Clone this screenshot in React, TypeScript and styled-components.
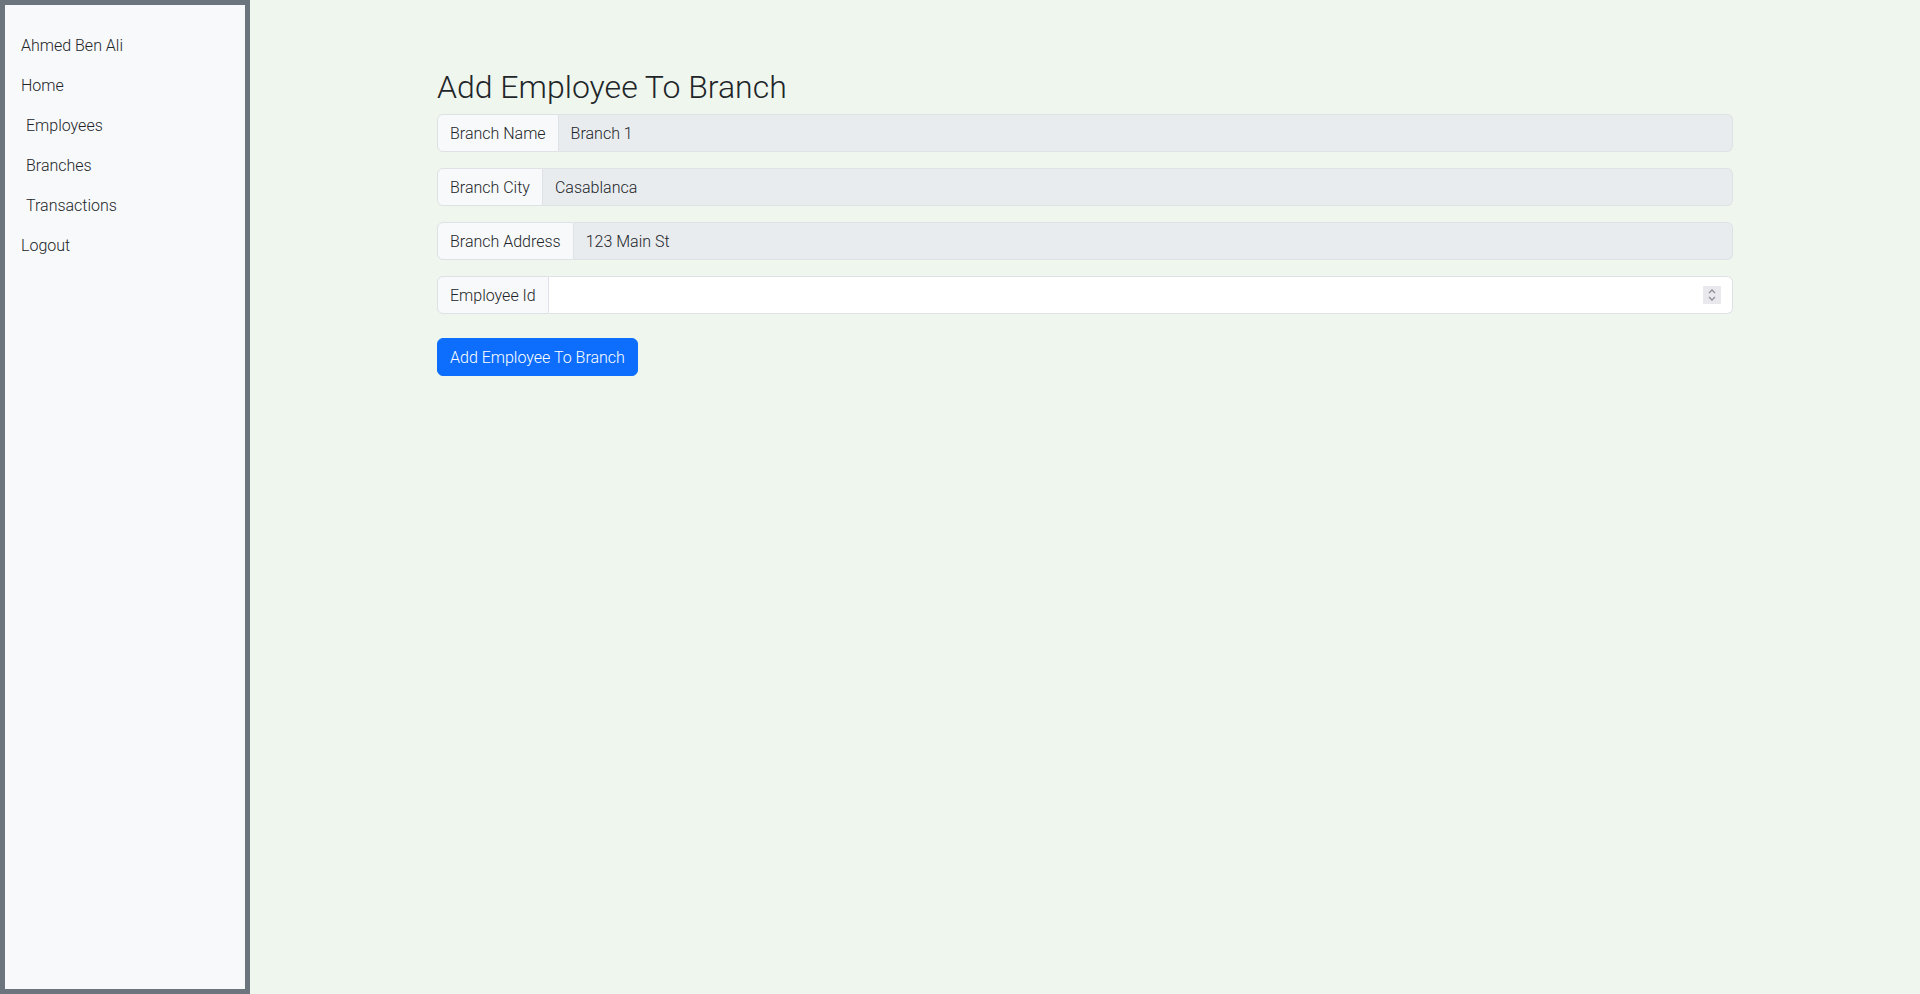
import { FC } from "react";
import styled, { createGlobalStyle } from "styled-components";

const GlobalStyle = createGlobalStyle`
  *, *::before, *::after {
    box-sizing: border-box;
  }
  body {
    margin: 0;
    font-family: Roboto, "Liberation Sans", sans-serif;
    font-weight: 300;
    font-size: 16px;
    line-height: 1.5;
    color: #212529;
    background: #eff6ed;
  }
`;

const Layout = styled.div`
  display: flex;
  min-height: 100vh;
`;

const Sidebar = styled.nav`
  width: 250px;
  flex: 0 0 250px;
  height: 100vh;
  background: #f8f9fa;
  border: 5px solid #6c757d;
  padding: 21px 16px;
  display: flex;
  flex-direction: column;
`;

const NavItem = styled.a<{ nested?: boolean }>`
  display: block;
  padding: 8px 0 8px ${({ nested }) => (nested ? "5px" : "0")};
  color: #212529;
  text-decoration: none;
  cursor: pointer;
`;

const Main = styled.main`
  flex: 1;
  padding-top: 68px;
`;

const Container = styled.div`
  max-width: 1320px;
  margin: 0 auto;
  padding: 0 12px;
`;

const Title = styled.h2`
  margin: 0 0 8px;
  font-size: 32px;
  font-weight: 300;
  line-height: 1.2;
`;

const InputGroup = styled.div`
  display: flex;
  width: 100%;
  margin-bottom: 16px;
`;

const Addon = styled.span`
  display: flex;
  align-items: center;
  padding: 7px 12px 5px;
  background: #f8f9fa;
  border: 1px solid #dee2e6;
  border-radius: 6px 0 0 6px;
  white-space: nowrap;
`;

const FieldWrap = styled.div`
  position: relative;
  flex: 1;
  display: flex;
`;

const Field = styled.input<{ readOnly?: boolean }>`
  flex: 1;
  min-width: 0;
  padding: 7px 12px 5px;
  font: inherit;
  line-height: 24px;
  color: #212529;
  background: ${({ readOnly }) => (readOnly ? "#e9ecef" : "#fff")};
  border: 1px solid #dee2e6;
  border-left: 0;
  border-radius: 0 6px 6px 0;
  outline: none;
  -moz-appearance: textfield;

  &::-webkit-inner-spin-button,
  &::-webkit-outer-spin-button {
    -webkit-appearance: none;
    margin: 0;
  }
`;

const Spinner = styled.span`
  position: absolute;
  right: 12px;
  top: 50%;
  transform: translateY(-50%);
  width: 18px;
  height: 18px;
  background: #e9e9ed;
  display: flex;
  align-items: center;
  justify-content: center;
  pointer-events: none;
`;

const Button = styled.button`
  margin-top: 8px;
  padding: 7px 12px 5px;
  font: inherit;
  line-height: 24px;
  color: #fff;
  background: #0d6efd;
  border: 1px solid #0d6efd;
  border-radius: 6px;
  cursor: pointer;
`;

const fields = [
  { label: "Branch Name", value: "Branch 1" },
  { label: "Branch City", value: "Casablanca" },
  { label: "Branch Address", value: "123 Main St" },
];

const SpinIcon = () => (
  <svg width="10" height="14" viewBox="0 0 10 14" fill="none">
    <path d="M2 5 L5 2 L8 5" stroke="#8f8f9d" strokeWidth="1.4" />
    <path d="M2 9 L5 12 L8 9" stroke="#8f8f9d" strokeWidth="1.4" />
  </svg>
);

const App: FC = () => (
  <>
    <GlobalStyle />
    <Layout>
      <Sidebar>
        <NavItem>Ahmed Ben Ali</NavItem>
        <NavItem>Home</NavItem>
        <NavItem nested>Employees</NavItem>
        <NavItem nested>Branches</NavItem>
        <NavItem nested>Transactions</NavItem>
        <NavItem>Logout</NavItem>
      </Sidebar>
      <Main>
        <Container>
          <Title>Add Employee To Branch</Title>
          {fields.map((f) => (
            <InputGroup key={f.label}>
              <Addon>{f.label}</Addon>
              <FieldWrap>
                <Field readOnly value={f.value} />
              </FieldWrap>
            </InputGroup>
          ))}
          <InputGroup>
            <Addon>Employee Id</Addon>
            <FieldWrap>
              <Field type="number" />
              <Spinner>
                <SpinIcon />
              </Spinner>
            </FieldWrap>
          </InputGroup>
          <Button>Add Employee To Branch</Button>
        </Container>
      </Main>
    </Layout>
  </>
);

export default App;
